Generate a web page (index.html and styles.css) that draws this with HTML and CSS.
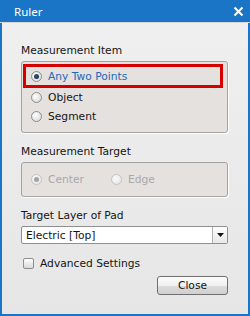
FILE: index.html
```html
<!DOCTYPE html>
<html lang="en">
<head>
    <meta charset="UTF-8">
    <meta name="viewport" content="width=device-width, initial-scale=1.0">
    <title>Ruler</title>
    <link rel="stylesheet" href="styles.css">
</head>
<body>
    <div class="window">
        <div class="titlebar">
            <span class="title">Ruler</span>
            <svg class="close-x" width="11" height="11" viewBox="0 0 11 11">
                <path d="M1.5 1.5 L9.5 9.5 M9.5 1.5 L1.5 9.5" stroke="#ffffff" stroke-width="2" fill="none"/>
            </svg>
        </div>
        <div class="content">
            <div class="label">Measurement Item</div>
            <div class="group">
                <div class="option selected">
                    <span class="radio checked"></span>
                    <span class="option-text">Any Two Points</span>
                </div>
                <div class="option">
                    <span class="radio"></span>
                    <span class="option-text">Object</span>
                </div>
                <div class="option">
                    <span class="radio"></span>
                    <span class="option-text">Segment</span>
                </div>
            </div>

            <div class="label spaced">Measurement Target</div>
            <div class="group inline disabled">
                <div class="option">
                    <span class="radio checked"></span>
                    <span class="option-text">Center</span>
                </div>
                <div class="option">
                    <span class="radio"></span>
                    <span class="option-text">Edge</span>
                </div>
            </div>

            <div class="label spaced">Target Layer of Pad</div>
            <div class="select">
                <span class="select-value">Electric [Top]</span>
                <span class="select-button">
                    <svg width="7" height="4" viewBox="0 0 7 4"><path d="M0 0 H7 L3.5 4 Z" fill="#111"/></svg>
                </span>
            </div>

            <div class="check-row">
                <span class="checkbox"></span>
                <span>Advanced Settings</span>
            </div>

            <div class="buttons">
                <button class="btn">Close</button>
            </div>
        </div>
    </div>
</body>
</html>
```

FILE: styles.css
```css
body {
    margin: 0;
    font-family: "DejaVu Sans", Verdana, sans-serif;
    font-size: 10.7px;
    color: #141414;
}
.window {
    width: 250px;
    height: 316px;
    box-sizing: border-box;
    border: 2px solid #1b75c6;
    border-top: 0;
    display: flex;
    flex-direction: column;
    background: linear-gradient(#f0f0f0, #e6e6e6);
}
.titlebar {
    height: 22px;
    margin: 0 -2px;
    padding: 0 6px 0 14px;
    background-color: #1b75c6;
    display: flex;
    align-items: center;
    justify-content: space-between;
    border-bottom: 1px solid #d8d8d8;
}
.title {
    font-family: "Noto Sans", sans-serif;
    font-size: 11.5px;
    color: #ffffff;
}
.content {
    flex: 1;
    padding: 21px 20px 0 19px;
    display: flex;
    flex-direction: column;
}
.label {
    height: 14px;
    line-height: 14px;
    margin-bottom: 3px;
}
.label.spaced {
    margin-top: 12px;
}
.group {
    border: 1px solid #a3a3a3;
    border-radius: 3px;
    background-color: #e5e1df;
    padding: 2px 0 6px;
    box-shadow: 1px 1px 0 #ffffff;
}
.group.inline {
    display: flex;
    align-items: center;
    height: 33px;
    padding: 0;
    gap: 18px;
}
.option {
    height: 19px;
    display: flex;
    align-items: center;
    padding-left: 9px;
    gap: 6px;
}
.option.selected {
    height: 18px;
    margin: 0 4px 0 1px;
    border: 3px solid #d40000;
    padding-left: 5px;
    color: #2468b8;
}
.radio {
    width: 9px;
    height: 9px;
    border-radius: 50%;
    border: 1px solid #8e8e8e;
    background: radial-gradient(circle at 40% 35%, #ffffff, #d3d3d3);
    display: flex;
    align-items: center;
    justify-content: center;
}
.radio.checked::after {
    content: "";
    width: 5px;
    height: 5px;
    border-radius: 50%;
    background: radial-gradient(circle at 40% 35%, #3d5478, #16243d);
}
.disabled {
    color: #a9a9a9;
}
.disabled .radio {
    border-color: #c4c4c4;
    background: radial-gradient(circle at 40% 35%, #fafafa, #e2e2e2);
}
.disabled .radio.checked::after {
    background: #a4a4a4;
}
.select {
    height: 18px;
    box-sizing: border-box;
    border: 1px solid #8f8f8f;
    border-radius: 2px;
    background-color: #ffffff;
    display: flex;
    align-items: center;
}
.select-value {
    flex: 1;
    padding-left: 4px;
}
.select-button {
    width: 14px;
    height: 100%;
    border-left: 1px solid #b0b0b0;
    background: linear-gradient(#fdfdfd, #e8e8e8);
    display: flex;
    align-items: center;
    justify-content: center;
}
.check-row {
    margin-top: 12px;
    height: 14px;
    display: flex;
    align-items: center;
    gap: 6px;
    padding-left: 2px;
}
.checkbox {
    width: 9px;
    height: 9px;
    border: 1px solid #8e8e8e;
    border-radius: 2px;
    background: linear-gradient(#ffffff, #d8d8d8);
}
.buttons {
    margin-top: 6px;
    display: flex;
    justify-content: flex-end;
}
.btn {
    width: 71px;
    height: 19px;
    padding: 0;
    font-family: "DejaVu Sans", Verdana, sans-serif;
    font-size: 10.7px;
    color: #141414;
    border: 1px solid #707070;
    border-radius: 3px;
    background: linear-gradient(#fbfbfb, #f0f0f0 50%, #dddddd 51%, #cfcfcf);
}
```
